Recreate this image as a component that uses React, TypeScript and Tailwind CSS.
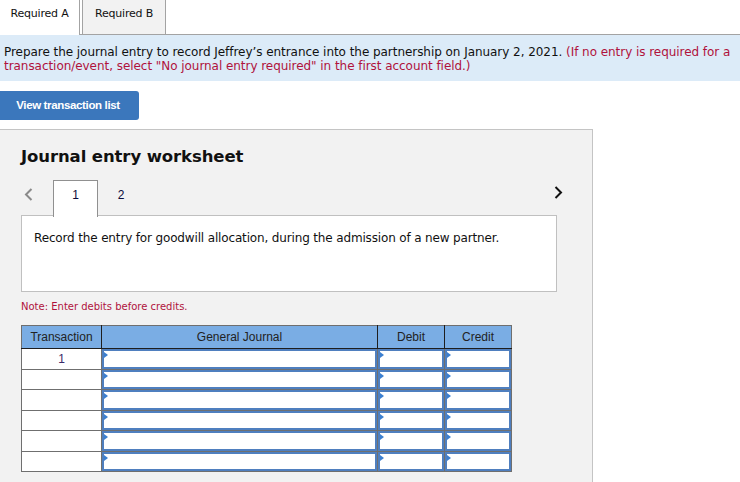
import React from "react";

const tah = { fontFamily: '"DejaVu Sans", sans-serif' };
const arial = { fontFamily: '"Liberation Sans", Arial, sans-serif' };

function InputCell({ w }: { w: string }) {
  return (
    <td className={`${w} border border-[#6f6f6f] p-0 h-[19.5px]`}>
      <div className="relative h-[19.5px] border-2 border-[#4f7fbf] bg-white">
        <div className="absolute left-0 top-[1px] w-0 h-0 border-t-[3px] border-b-[3px] border-l-[4px] border-t-transparent border-b-transparent border-l-[#3b7fd0]" />
      </div>
    </td>
  );
}

export default function App() {
  const rows = [0, 1, 2, 3, 4, 5];
  return (
    <div className="w-[740px] h-[482px] overflow-hidden bg-white text-[#222]" style={tah}>
      {/* Tabs */}
      <div className="flex h-[35px]">
        <div className="w-[80px] h-[35px] border-r border-[#a3a3a3] flex items-center justify-center text-[11px] tracking-[-0.2px] text-[#111] pb-[6px]">
          Required A
        </div>
        <div className="w-[2px] border-b border-[#a3a3a3]" />
        <div className="w-[84px] h-[35px] bg-[#f2f2f2] border-l border-r border-b border-[#a3a3a3] flex items-center justify-center text-[11px] tracking-[-0.2px] text-[#111] pb-[6px]">
          Required B
        </div>
        <div className="flex-1 border-b border-[#a3a3a3]" />
      </div>

      {/* Info */}
      <div className="h-[46px] bg-[#dcebf8] px-[4px] pt-[10px] text-[12px] leading-[14px] tracking-[-0.05px] text-[#111]">
        Prepare the journal entry to record Jeffrey’s entrance into the partnership on January 2, 2021.{" "}
        <span className="text-[#b0123c]">
          (If no entry is required for a transaction/event, select "No journal entry required" in the first account field.)
        </span>
      </div>

      {/* Button */}
      <div className="mt-[10px]">
        <div
          className="w-[139px] h-[29px] bg-[#3b77bc] rounded-r-[3px] flex items-center justify-center pr-[3px] text-white font-bold text-[11.5px] tracking-[-0.35px]"
          style={arial}
        >
          View transaction list
        </div>
      </div>

      {/* Panel */}
      <div className="mt-[9px] w-[593px] h-[400px] bg-[#f2f2f2] border-t border-r border-[#c4c4c4] pl-[21px]">
        <div className="mt-[17px] text-[16.5px] font-bold leading-[20px] tracking-[-0.1px] text-[#111]">
          Journal entry worksheet
        </div>

        {/* nav */}
        <div className="relative mt-[13px] flex items-start h-[36px] w-[535px]">
          <div className="w-[32px] h-[36px] pl-[3px] pt-[8px]">
            <svg width="9" height="13" viewBox="0 0 9 13">
              <path d="M7.5 1 L2 6.5 L7.5 12" stroke="#8a8a8a" strokeWidth="2" fill="none" />
            </svg>
          </div>
          <div className="relative z-10 w-[45px] h-[37px] bg-white border border-b-0 border-[#909090] flex justify-center pt-[5px] text-[12px] text-[#0b0b3a]" style={arial}>
            1
          </div>
          <div className="w-[46px] h-[36px] flex justify-center pt-[6px] text-[12px] text-[#0b0b3a]" style={arial}>
            2
          </div>
          <div className="flex-1" />
          <div className="absolute right-[-7px] top-[6px]">
            <svg width="9" height="13" viewBox="0 0 9 13">
              <path d="M1.5 1 L7 6.5 L1.5 12" stroke="#111" strokeWidth="2" fill="none" />
            </svg>
          </div>
        </div>

        {/* content box */}
        <div className="w-[536px] h-[77px] bg-white border border-[#c0c0c0] -mt-[1px] pl-[12px] pt-[13px] text-[12px] tracking-[-0.15px] text-[#111]">
          Record the entry for goodwill allocation, during the admission of a new partner.
        </div>

        <div className="mt-[9px] text-[10px] text-[#b0123c] leading-[12px]">
          Note: Enter debits before credits.
        </div>

        {/* table */}
        <table className="mt-[12px] border-collapse border border-[#6f6f6f] text-[12px]" style={arial}>
          <thead>
            <tr className="h-[23px] bg-[#7aade4] text-[#222]">
              <th className="w-[80px] font-normal border-r border-b border-[#1e1e1e]">Transaction</th>
              <th className="w-[276px] font-normal border-r border-b border-[#1e1e1e]">General Journal</th>
              <th className="w-[67px] font-normal border-r border-b border-[#1e1e1e]">Debit</th>
              <th className="w-[67px] font-normal border-b border-[#1e1e1e]">Credit</th>
            </tr>
          </thead>
          <tbody>
            {rows.map((r) => (
              <tr key={r}>
                <td className="w-[80px] h-[19.5px] border border-[#6f6f6f] bg-white text-center text-[#3a2a6a] p-0 align-middle">
                  {r === 0 ? "1" : ""}
                </td>
                <InputCell w="w-[276px]" />
                <InputCell w="w-[67px]" />
                <InputCell w="w-[67px]" />
              </tr>
            ))}
          </tbody>
        </table>
      </div>
    </div>
  );
}
